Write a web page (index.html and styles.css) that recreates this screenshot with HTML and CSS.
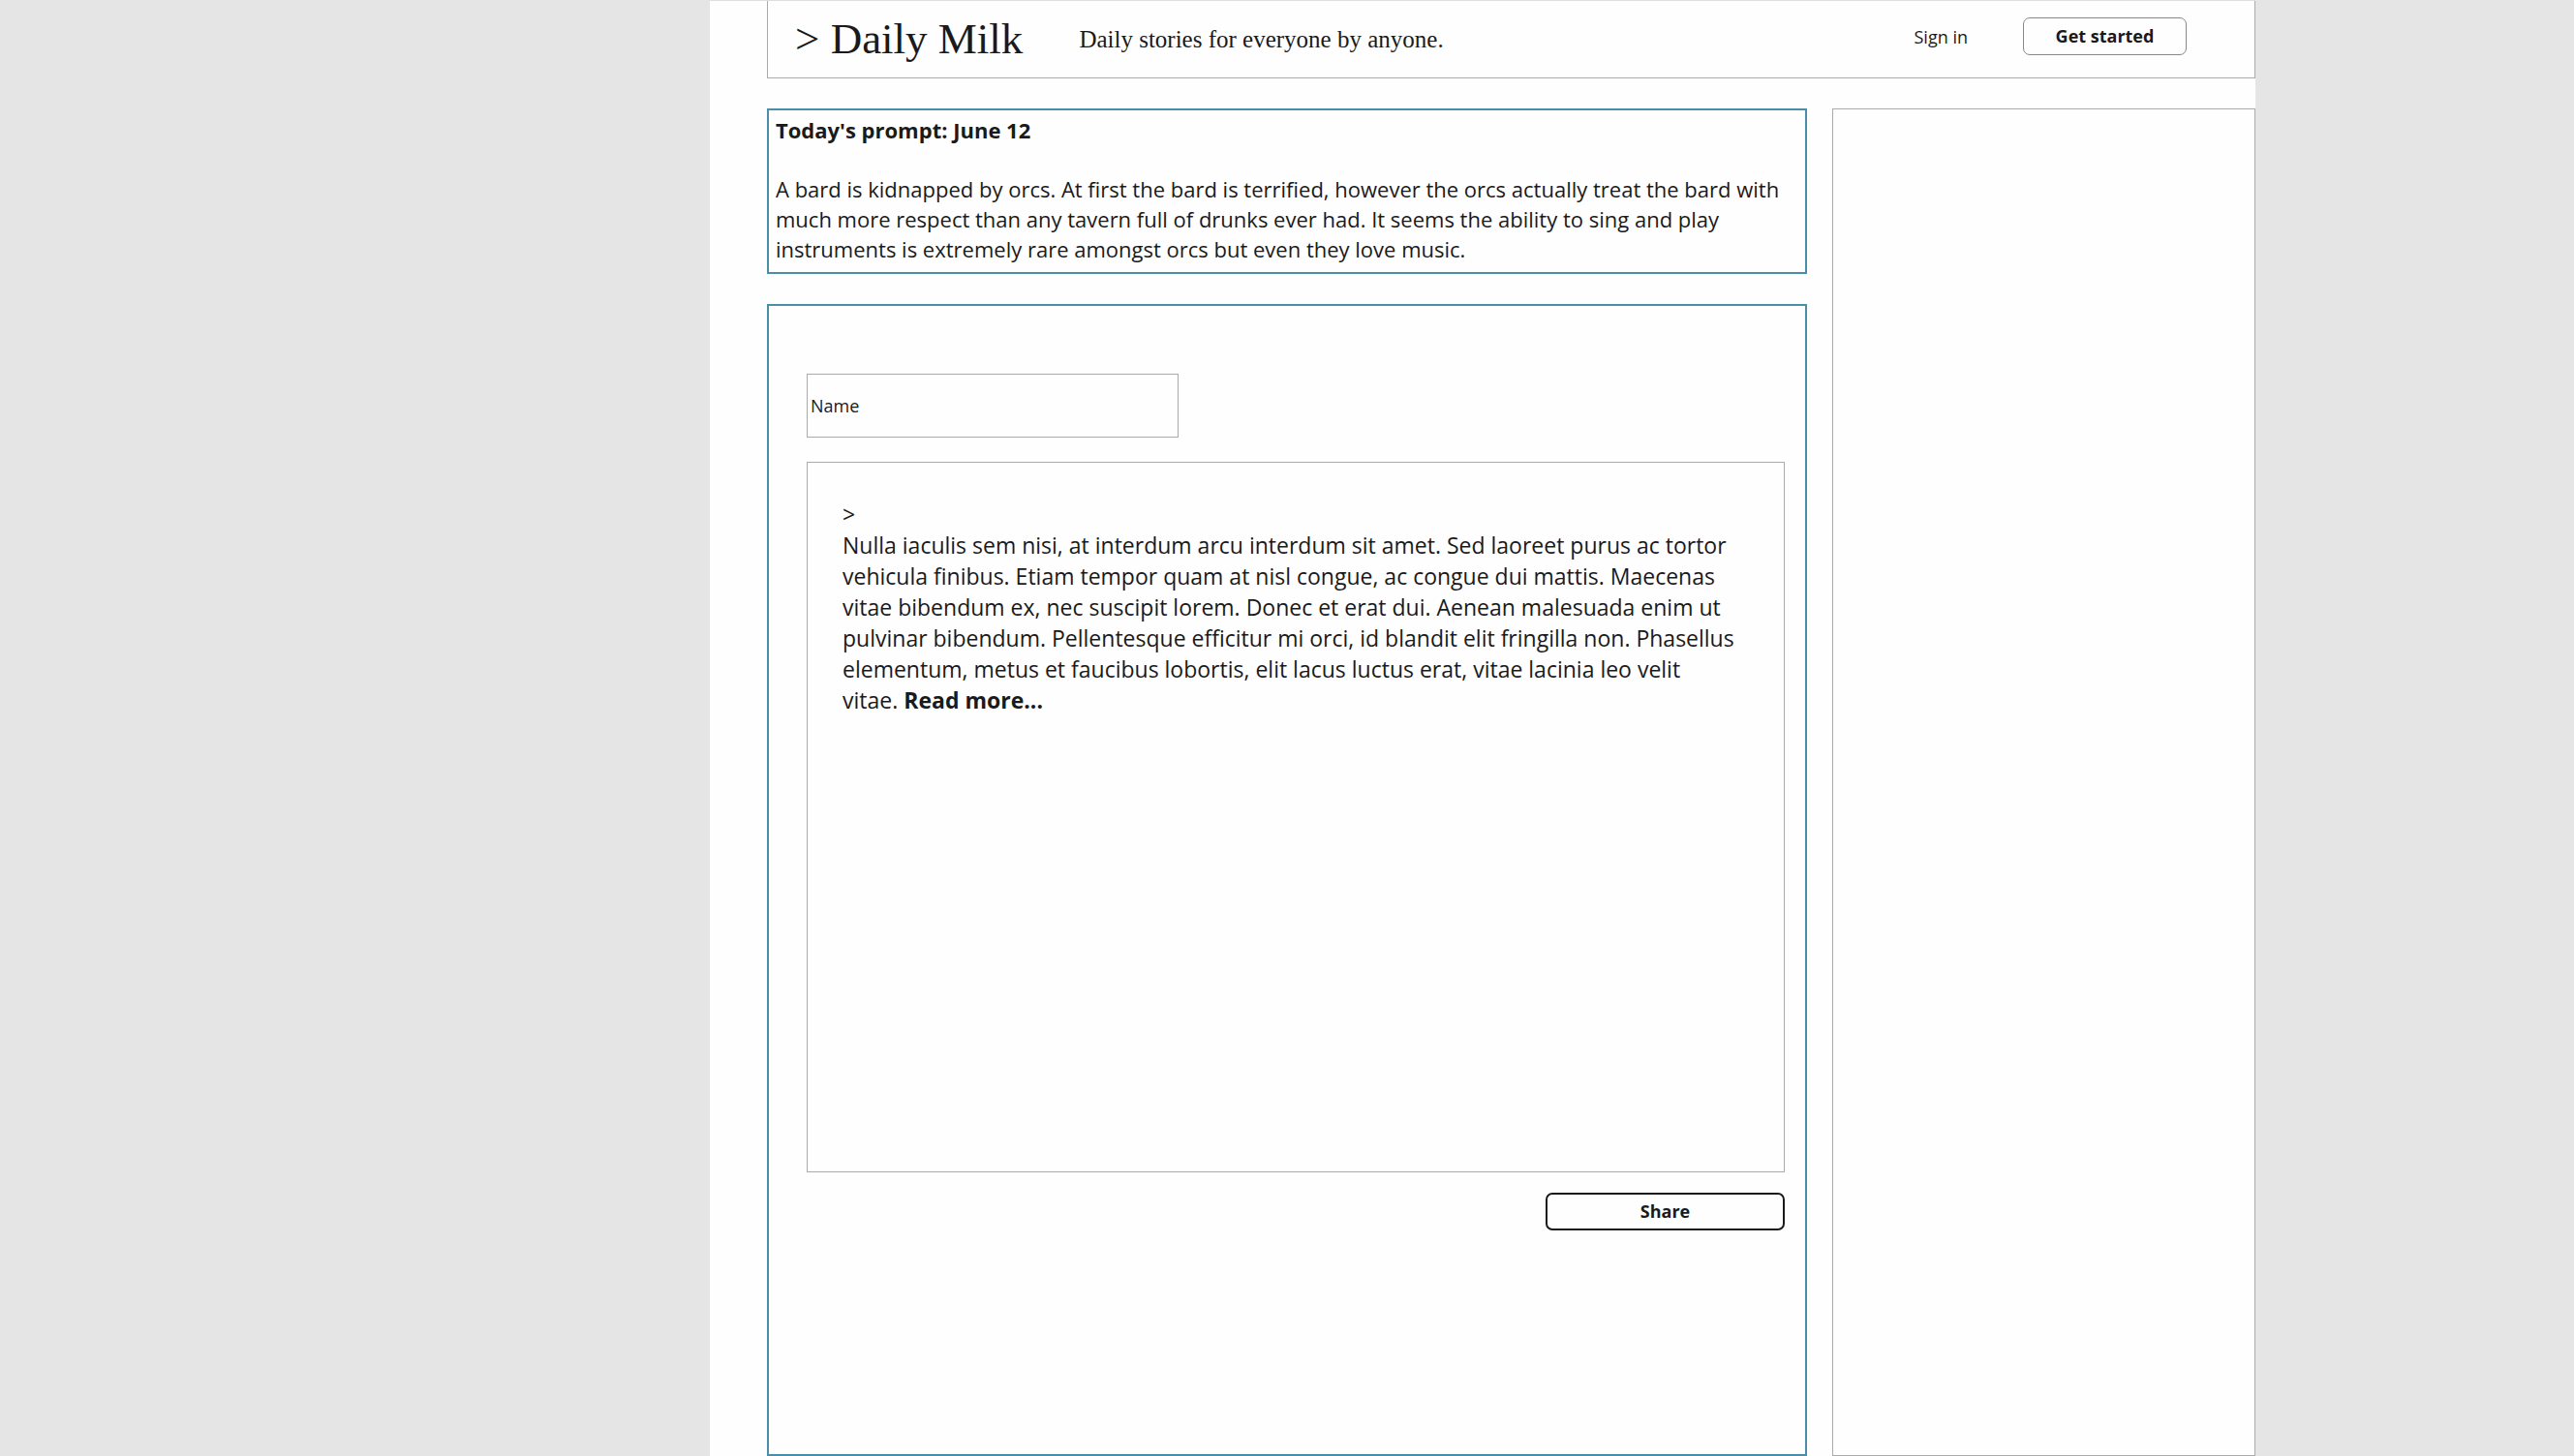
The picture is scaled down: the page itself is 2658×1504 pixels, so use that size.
FILE: index.html
```
<!DOCTYPE html>
<html lang="en">
<head>
<meta charset="utf-8">
<title>Daily Milk</title>
<link rel="stylesheet" href="styles.css">
</head>
<body>
<div class="page">
  <header class="header">
    <h1 class="logo">&gt; Daily Milk</h1>
    <p class="tagline">Daily stories for everyone by anyone.</p>
    <nav class="account">
      <a class="sign-in" href="#">Sign in</a>
      <button class="button button-start" type="button">Get started</button>
    </nav>
  </header>
  <div class="columns">
    <main class="main">
      <section class="prompt">
        <h2 class="prompt-title">Today's prompt: June 12</h2>
        <p class="prompt-text">A bard is kidnapped by orcs. At first the bard is terrified, however the orcs actually treat the bard with much more respect than any tavern full of drunks ever had. It seems the ability to sing and play instruments is extremely rare amongst orcs but even they love music.</p>
      </section>
      <form class="story-form">
        <input class="name" type="text" placeholder="Name" aria-label="Name">
        <div class="story">
          <p>&gt;</p>
          <p>Nulla iaculis sem nisi, at interdum arcu interdum sit amet. Sed laoreet purus ac tortor vehicula finibus. Etiam tempor quam at nisl congue, ac congue dui mattis. Maecenas vitae bibendum ex, nec suscipit lorem. Donec et erat dui. Aenean malesuada enim ut pulvinar bibendum. Pellentesque efficitur mi orci, id blandit elit fringilla non. Phasellus elementum, metus et faucibus lobortis, elit lacus luctus erat, vitae lacinia leo velit vitae. <a class="read-more" href="#">Read more...</a></p>
        </div>
        <button class="button button-share" type="button">Share</button>
      </form>
    </main>
    <aside class="sidebar"></aside>
  </div>
</div>
</body>
</html>
```
FILE: styles.css
```
* {
  box-sizing: border-box;
}

body {
  margin: 0;
  display: grid;
  grid-template-columns: 733fr 1596fr 329fr;
  background: #e5e5e5;
  color: #1a1a1a;
  font-family: "Open Sans", sans-serif;
  font-size: 18px;
}

h1, h2, p {
  margin: 0;
  font-weight: 400;
}

a {
  color: inherit;
  text-decoration: none;
}

.page {
  grid-column: 2;
  min-height: 100vh;
  padding-left: 59px;
  display: flex;
  flex-direction: column;
  gap: 31px;
  background: #fefefe;
  border-top: 1px solid #dedede;
}

.header {
  min-height: 80px;
  padding: 0 70px 6px 28px;
  display: flex;
  align-items: center;
  border: 1px solid #aaa;
  border-top: 0;
}

.logo {
  padding-top: 4px;
  font-family: "Liberation Serif", serif;
  font-size: 45px;
  line-height: 60px;
}

.tagline {
  margin-left: 58px;
  padding-top: 6px;
  font-family: "Liberation Serif", serif;
  font-size: 25px;
}

.account {
  margin-left: auto;
  display: flex;
  align-items: center;
  gap: 57px;
}

.button {
  height: 39px;
  padding: 0 0 1px;
  background: transparent;
  color: inherit;
  border-radius: 7px;
  font: inherit;
  font-weight: 700;
}

.button-start {
  width: 169px;
  border: 1px solid #888;
}

.columns {
  flex: 1;
  display: grid;
  grid-template-columns: minmax(0, 1fr) 437px;
  gap: 26px;
}

.main {
  display: flex;
  flex-direction: column;
  gap: 31px;
}

.prompt {
  padding: 5px 7px 8px;
  border: 2px solid #4a8fa8;
  font-size: 22px;
  line-height: 31px;
}

.prompt-title {
  margin-bottom: 30px;
  font-size: 22px;
  font-weight: 700;
}

.story-form {
  flex: 1;
  padding: 70px 21px 24px 39px;
  display: flex;
  flex-direction: column;
  border: 2px solid #4a8fa8;
}

.name {
  width: 384px;
  height: 66px;
  padding: 0 3px;
  background: transparent;
  border: 1px solid #aaa;
  border-radius: 0;
  color: inherit;
  font: inherit;
}

.name::placeholder {
  color: #1a1a1a;
  opacity: 1;
}

.story {
  min-height: 734px;
  margin-top: 25px;
  padding: 37px 48px 37px 36px;
  border: 1px solid #aaa;
  font-size: 23px;
  line-height: 32px;
}

.read-more {
  font-weight: 700;
}

.button-share {
  width: 247px;
  margin-top: 21px;
  align-self: flex-end;
  border: 2px solid #1a1a1a;
}

.sidebar {
  border: 1px solid #aaa;
}
```
